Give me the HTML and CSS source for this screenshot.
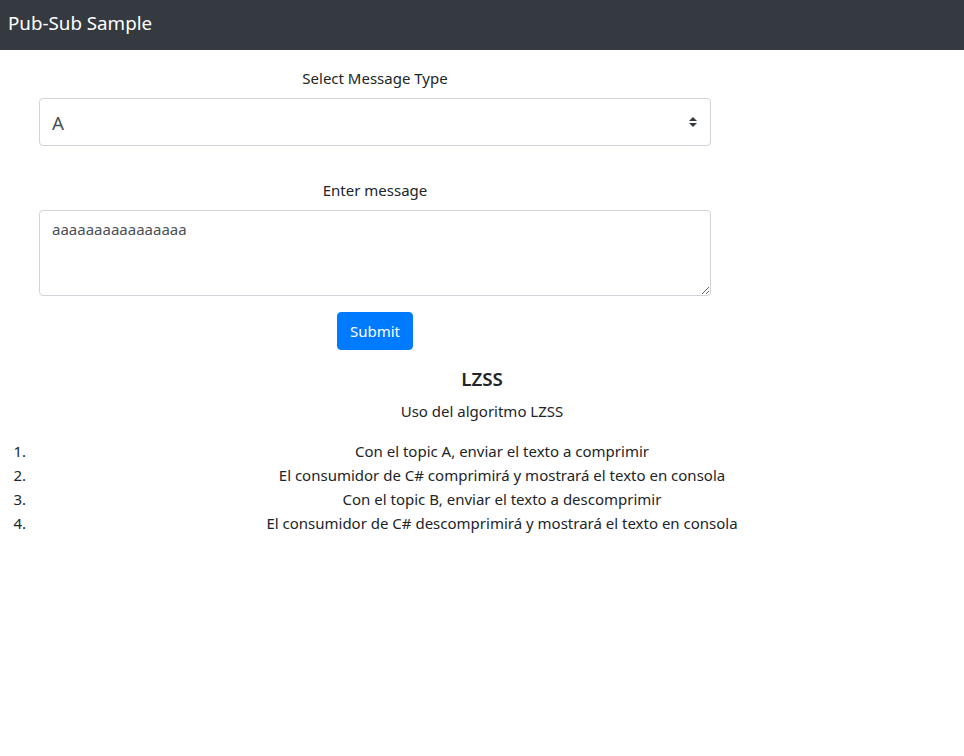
FILE: index.html
```html
<!DOCTYPE html>
<html lang="es">
<head>
<meta charset="utf-8">
<title>Pub-Sub Sample</title>
<link rel="stylesheet" href="styles.css">
</head>
<body>
<nav class="navbar"><span class="brand">Pub-Sub Sample</span></nav>
<main class="page">
  <form class="form">
    <label class="label" for="type">Select Message Type</label>
    <div class="select-wrap">
      <select id="type" class="select"><option>A</option><option>B</option></select>
      <svg class="select-arrow" width="8" height="10" viewBox="0 0 8 10"><path d="M4 0L8 4H0z M4 10L0 6H8z" fill="#343a40"/></svg>
    </div>
    <label class="label label-msg" for="msg">Enter message</label>
    <textarea id="msg" class="textarea">aaaaaaaaaaaaaaaa</textarea>
    <div class="actions"><button type="button" class="btn">Submit</button></div>
  </form>
  <section class="info">
    <h5 class="title">LZSS</h5>
    <p class="desc">Uso del algoritmo LZSS</p>
    <ol class="steps">
      <li>Con el topic A, enviar el texto a comprimir</li>
      <li>El consumidor de C# comprimirá y mostrará el texto en consola</li>
      <li>Con el topic B, enviar el texto a descomprimir</li>
      <li>El consumidor de C# descomprimirá y mostrará el texto en consola</li>
    </ol>
  </section>
</main>
</body>
</html>
```
FILE: styles.css
```css
* { box-sizing: border-box; }
body {
  margin: 0;
  font-family: "Segoe UI", "Noto Sans", "Open Sans", sans-serif;
  font-size: 15px;
  line-height: 24px;
  color: #212529;
  background: #fff;
}
.navbar {
  background: #343a40;
  height: 50px;
  display: flex;
  align-items: center;
  padding: 0 8px;
}
.brand {
  color: #fff;
  font-size: 18.75px;
  line-height: 30px;
  margin-top: -4px;
}
.page { padding-top: 16px; }
.form {
  width: 672px;
  margin-left: 39px;
  display: flex;
  flex-direction: column;
}
.label {
  display: block;
  text-align: center;
  margin-bottom: 8px;
}
.label-msg { margin-top: 32px; }
.select-wrap { position: relative; }
.select {
  appearance: none;
  -webkit-appearance: none;
  width: 100%;
  height: 48px;
  border: 1px solid #ced4da;
  border-radius: 4px;
  background: #fff;
  color: #495057;
  font-family: inherit;
  font-size: 18.75px;
  padding: 0 12px;
}
.select-arrow {
  position: absolute;
  right: 14px;
  top: 19px;
}
.textarea {
  width: 100%;
  height: 86px;
  border: 1px solid #ced4da;
  border-radius: 4px;
  padding: 6px 12px;
  font-family: inherit;
  font-size: 15px;
  line-height: 24px;
  color: #495057;
  resize: both;
}
.actions {
  display: flex;
  justify-content: center;
  margin-top: 16px;
}
.btn {
  background: #007bff;
  border: 1px solid #007bff;
  color: #fff;
  border-radius: 4px;
  height: 38px;
  padding: 0 12px;
  font-family: inherit;
  font-size: 15px;
}
.info { text-align: center; margin-top: 17px; }
.title {
  margin: 0 0 8px;
  font-size: 18.75px;
  line-height: 24px;
  font-weight: 600;
}
.desc { margin: 0 0 16px; }
.steps {
  margin: 0;
  padding: 0;
  list-style: none;
  counter-reset: step;
}
.steps li {
  counter-increment: step;
  display: grid;
  grid-template-columns: 40px 1fr;
}
.steps li::before {
  content: counter(step) ".";
  text-align: right;
  padding-right: 14px;
}
```
